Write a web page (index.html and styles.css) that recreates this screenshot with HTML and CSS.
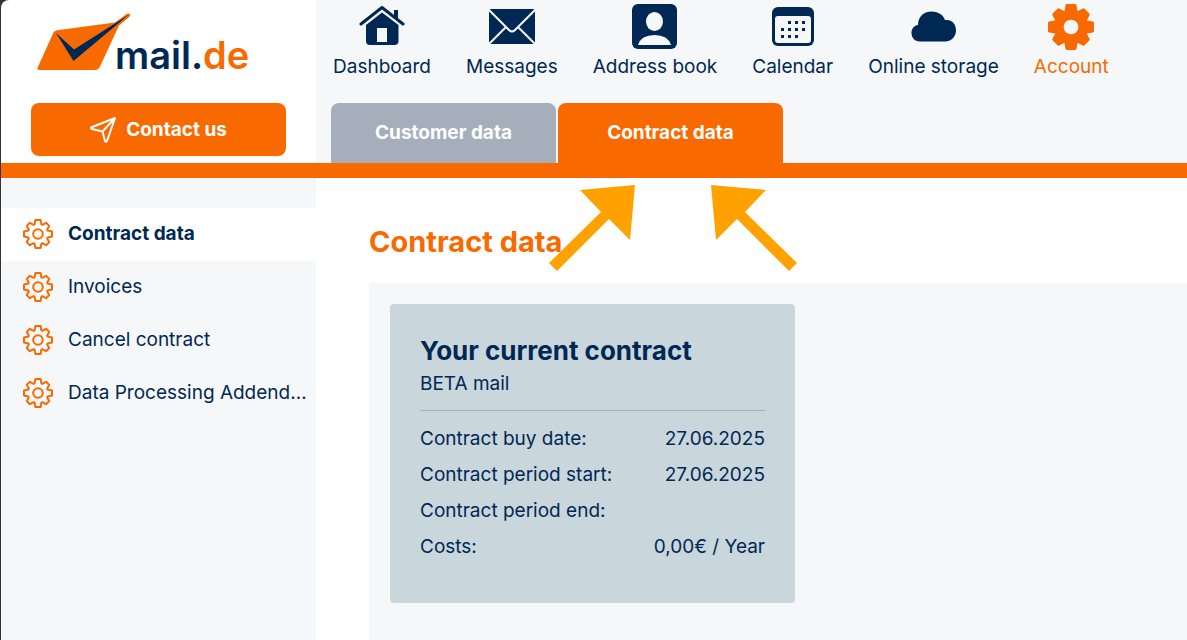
FILE: index.html
```
<!DOCTYPE html>
<html lang="en">
<head>
  <meta charset="UTF-8">
  <meta name="viewport" content="width=device-width, initial-scale=1.0">
  <title>mail.de - Contract data</title>
  <link rel="stylesheet" href="styles.css">
</head>
<body>
  <svg class="sprite" aria-hidden="true">
    <symbol id="gear" viewBox="-15 -15 30 30">
      <path d="M-3.4-9.6-2.6-14H2.6L3.4-9.6 4.4-9.2 8.1-11.2 11.2-8.1 9.2-4.4 9.6-3.4 14-2.6V2.6L9.6 3.4 9.2 4.4 11.2 8.1 8.1 11.2 4.4 9.2 3.4 9.6 2.6 14H-2.6L-3.4 9.6-4.4 9.2-8.1 11.2-11.2 8.1-9.2 4.4-9.6 3.4-14 2.6V-2.6L-9.6-3.4-9.2-4.4-11.2-8.1-8.1-11.2-4.4-9.2Z"/>
      <circle class="gear-hole" r="4.8"/>
    </symbol>
  </svg>

  <div class="page">
    <header class="header">
      <div class="brand">
        <a class="logo" href="#" aria-label="mail.de">
          <svg width="94" height="58" viewBox="0 0 94 58">
            <path fill="#f86a00" d="M2 57Q-.5 57 .7 54.500L16.500 19.500Q17.500 17.500 20 17.200L78 9.500 90 .8Q92-.2 93 1.500 93.500 3.200 91.500 4.500L82 12.500 63 53.500Q61.500 57 57.500 57Z"/>
            <path fill="#002855" d="M19 20 37 36.500 92 1.500 36.500 48Z"/>
          </svg>
          <span class="logo-text">mail.<span class="logo-tld">de</span></span>
        </a>
        <button class="contact" type="button">
          <svg class="plane" width="26" height="26" viewBox="0 0 26 26">
            <path d="M25 1 1 10.500Q1 11.500 2 12L12.500 14.500 15 24Q16 25.500 17 24Z"/>
            <path d="M25 1 12.500 14.500"/>
          </svg>
          Contact us
        </button>
      </div>

      <div class="top">
        <nav class="nav">
          <a href="#">
            <svg width="46" height="46" viewBox="0 0 46 46">
              <path fill-rule="evenodd" d="M7 21 23 8.500 39.500 21V37Q39.500 41 35.500 41H11Q7 41 7 37ZM18 24V38H28V24Z"/>
              <path d="M35 6H39V15L35 12Z"/>
              <path fill="none" stroke="currentColor" stroke-width="3" stroke-linecap="round" stroke-linejoin="round" d="M2 20 23 3.500 44 20"/>
            </svg>
            Dashboard
          </a>
          <a href="#">
            <svg width="46" height="46" viewBox="0 0 46 46">
              <rect x="0" y="5" width="46" height="35" rx="2"/>
              <path fill="none" stroke="#f6f7f9" stroke-width="2" d="M0 6 20 26Q23 29 26 26L46 6M0 40 17 23M46 40 29 23"/>
            </svg>
            Messages
          </a>
          <a href="#">
            <svg width="46" height="46" viewBox="0 0 46 46">
              <rect width="45" height="45" rx="6"/>
              <ellipse fill="#f6f7f9" cx="22.500" cy="17.500" rx="8.500" ry="9.500"/>
              <path fill="#f6f7f9" d="M6 41Q9 31 22.500 31T39 41Z"/>
            </svg>
            Address book
          </a>
          <a href="#">
            <svg width="46" height="46" viewBox="0 0 46 46">
              <rect x="2" y="3" width="42" height="39" rx="6"/>
              <rect fill="#f6f7f9" x="5" y="12" width="36" height="27" rx="3"/>
              <path stroke="currentColor" stroke-width="3" stroke-dasharray="3 4" d="M18 18.500H36M11 25.500H36M11 32.500H29"/>
            </svg>
            Calendar
          </a>
          <a href="#">
            <svg width="46" height="46" viewBox="0 0 46 46">
              <path d="M9 37.500C-2 37.500-2 22 7 21C7 4 30 4 34 16C42 15 45 21 45 26.500C45 33 40 37.500 34 37.500Z"/>
            </svg>
            Online storage
          </a>
          <a class="active" href="#">
            <svg class="gear-solid" width="46" height="46"><use href="#gear"/></svg>
            Account
          </a>
        </nav>
        <div class="tabs">
          <a href="#">Customer data</a>
          <a class="active" href="#">Contract data</a>
        </div>
      </div>
    </header>

    <div class="content">
      <nav class="sidebar">
        <a class="active" href="#"><svg class="gear-line" width="30" height="30"><use href="#gear"/></svg><span>Contract data</span></a>
        <a href="#"><svg class="gear-line" width="30" height="30"><use href="#gear"/></svg><span>Invoices</span></a>
        <a href="#"><svg class="gear-line" width="30" height="30"><use href="#gear"/></svg><span>Cancel contract</span></a>
        <a href="#"><svg class="gear-line" width="30" height="30"><use href="#gear"/></svg><span>Data Processing Addend…</span></a>
      </nav>

      <main class="main">
        <h1>Contract data</h1>
        <section class="panel">
          <div class="card">
            <h2>Your current contract</h2>
            <p>BETA mail</p>
            <table>
              <tr><th scope="row">Contract buy date:</th><td>27.06.2025</td></tr>
              <tr><th scope="row">Contract period start:</th><td>27.06.2025</td></tr>
              <tr><th scope="row">Contract period end:</th><td></td></tr>
              <tr><th scope="row">Costs:</th><td>0,00€ / Year</td></tr>
            </table>
          </div>
        </section>
        <svg class="arrows" width="248" height="87" viewBox="0 0 248 87" aria-hidden="true">
          <path d="M86 0 31 5 52 27 0 78 8 86 60 34 81 55Z"/>
          <path d="M162 0 217 5 196 27 248 78 240 86 188 34 167 55Z"/>
        </svg>
      </main>
    </div>
  </div>
</body>
</html>
```
FILE: styles.css
```
* {
  box-sizing: border-box;
}
html {
  background: #333238;
}
body {
  margin: 0;
  font-family: 'Inter', 'Liberation Sans', sans-serif;
  font-size: 19px;
  line-height: 24px;
  color: #002855;
}
a {
  color: inherit;
  text-decoration: none;
}
svg {
  flex-shrink: 0;
  fill: currentColor;
}
.sprite {
  position: absolute;
  width: 0;
  height: 0;
}
.page {
  min-height: 100vh;
  display: flex;
  flex-direction: column;
  margin-left: 1px;
  background: #fff;
  border-top-left-radius: 8px;
  overflow: hidden;
}

/* header */
.header {
  display: grid;
  grid-template-columns: 315px 1fr;
  border-bottom: 15px solid #f86a00;
}
.brand {
  display: flex;
  flex-direction: column;
  justify-content: space-between;
  padding: 13px 30px 7px;
}
.logo {
  display: flex;
  align-items: flex-start;
  padding-left: 6px;
}
.logo-text {
  margin: 18px 0 0 -16px;
  font-size: 38px;
  line-height: 48px;
  font-weight: 600;
}
.logo-tld {
  color: #f86a00;
}
.contact {
  display: flex;
  align-items: center;
  justify-content: center;
  gap: 10px;
  height: 53px;
  border: none;
  border-radius: 8px;
  background: #f86a00;
  color: #fff;
  font: inherit;
  font-weight: 700;
  cursor: pointer;
}
.plane {
  fill: none;
  stroke: #fff;
  stroke-width: 2;
  stroke-linejoin: round;
}
.top {
  display: flex;
  flex-direction: column;
  gap: 24px;
  padding: 4px 15px 0;
  background: #f6f7f9;
}
.nav {
  display: flex;
  gap: 35px;
  padding-left: 2px;
}
.nav a {
  display: flex;
  flex-direction: column;
  align-items: center;
  gap: 5px;
  white-space: nowrap;
}
.nav .active {
  color: #f86a00;
}
.gear-solid {
  --hole: #f6f7f9;
  stroke: currentColor;
  stroke-width: 2;
  stroke-linejoin: round;
}
.gear-hole {
  fill: var(--hole);
  stroke: var(--hole-line, none);
}
.tabs {
  display: flex;
  gap: 2px;
}
.tabs a {
  width: 225px;
  height: 60px;
  border-radius: 8px 8px 0 0;
  background: #a5afbb;
  color: #fff;
  font-weight: 700;
  line-height: 60px;
  text-align: center;
}
.tabs .active {
  background: #f86a00;
}

/* content */
.content {
  flex: 1;
  display: grid;
  grid-template-columns: 315px 1fr;
}
.sidebar {
  padding-top: 30px;
  background: #f6f7f9;
}
.sidebar a {
  display: flex;
  align-items: center;
  gap: 15px;
  height: 53px;
  padding: 0 8px 2px 22px;
  white-space: nowrap;
}
.sidebar .active {
  background: #fff;
  font-weight: 700;
}
.sidebar span {
  overflow: hidden;
  text-overflow: ellipsis;
}
.gear-line {
  --hole: none;
  --hole-line: #f86a00;
  fill: none;
  stroke: #f86a00;
  stroke-width: 2;
  stroke-linejoin: round;
}
.main {
  position: relative;
  display: flex;
  flex-direction: column;
  padding: 46px 0 0 53px;
}
h1 {
  margin: 0 0 23px;
  color: #f86a00;
  font-size: 29px;
  line-height: 36px;
}
.panel {
  flex: 1;
  padding: 21px;
  background: #f6f7f9;
}
.card {
  width: 405px;
  padding: 29px 30px 38px;
  border-radius: 4px;
  background: #c9d6dc;
}
.card h2 {
  margin: 0;
  font-size: 26px;
  line-height: 36px;
}
.card p {
  margin: 0;
  padding: 3px 0 14px;
  border-bottom: 1px solid #a5b1bd;
}
.card table {
  width: 100%;
  margin-top: 10px;
  border-collapse: collapse;
}
.card th,
.card td {
  height: 36px;
  padding: 0;
  font-weight: 400;
  text-align: left;
}
.card td {
  text-align: right;
}
.arrows {
  position: absolute;
  top: 7px;
  left: 233px;
  fill: #ffa200;
}
```
